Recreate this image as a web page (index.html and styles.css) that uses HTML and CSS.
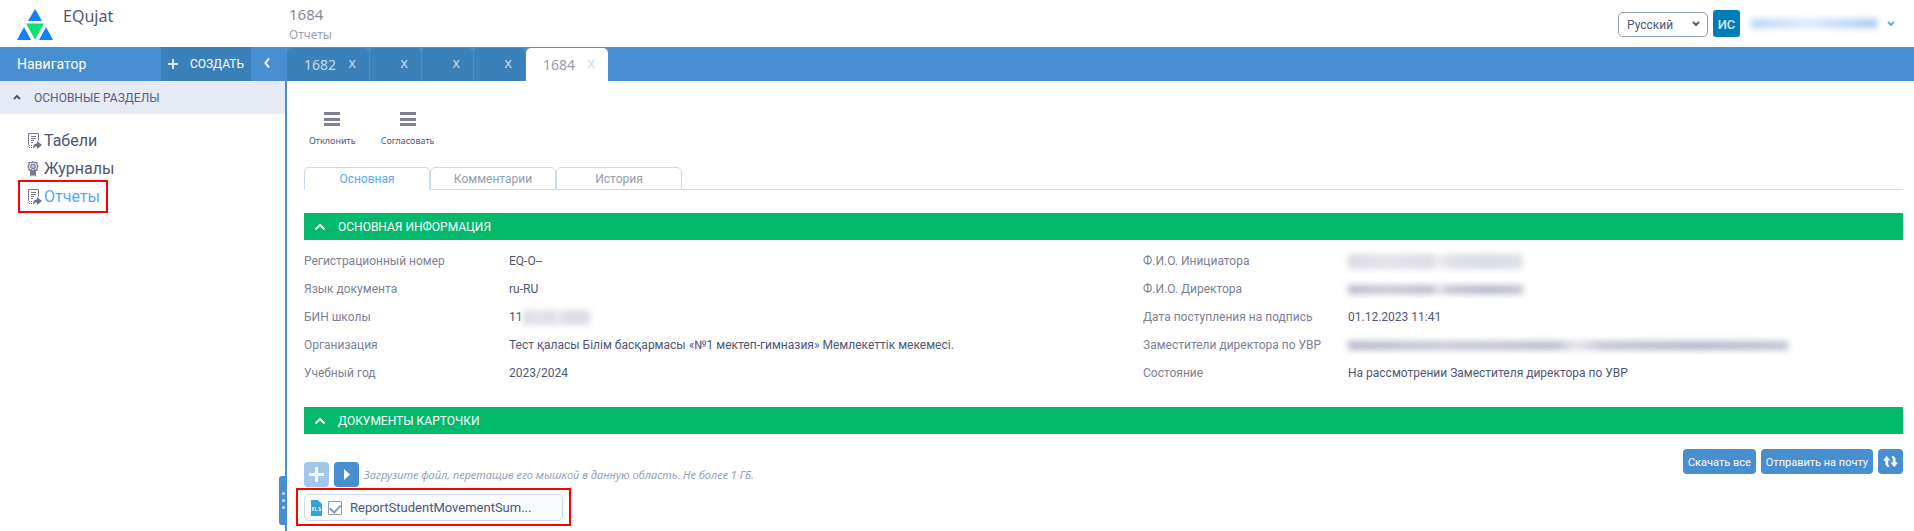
FILE: index.html
```html
<!DOCTYPE html>
<html lang="ru">
<head>
    <meta charset="UTF-8">
    <meta name="viewport" content="width=device-width, initial-scale=1.0">
    <title>EQujat</title>
    <link rel="stylesheet" href="styles.css">
</head>
<body>
    <header class="header">
        <div class="brand">
            <svg class="logo" viewBox="0 0 36 31" aria-hidden="true">
                <path fill="#0f82fb" d="M18 0l7 12H11zM7 18l7 13H0zM29 18l7 13H22z"/>
                <path fill="#0be075" d="M9 14.500h18L18 30.500z"/>
            </svg>
            <span class="brand-name">EQujat</span>
        </div>
        <div class="page-title">
            <h1>1684</h1>
            <p>Отчеты</p>
        </div>
        <div class="user">
            <div class="lang">
                <select aria-label="Язык">
                    <option>Русский</option>
                </select>
                <svg class="lang-arrow" viewBox="0 0 8 5" aria-hidden="true"><path d="M1 1l3 3 3-3"/></svg>
            </div>
            <span class="avatar">ИС</span>
            <button class="user-menu" aria-label="Меню пользователя">
                <span class="hidden-text user-name"></span>
                <svg viewBox="0 0 8 5" aria-hidden="true"><path d="M1 1l3 3 3-3"/></svg>
            </button>
        </div>
    </header>

    <div class="topbar">
        <div class="nav-head">
            <span class="nav-title">Навигатор</span>
            <button class="create">
                <svg viewBox="0 0 10 10" aria-hidden="true"><path d="M5 0v10M0 5h10"/></svg>
                СОЗДАТЬ
            </button>
            <button class="collapse" aria-label="Свернуть">
                <svg viewBox="0 0 6 10" aria-hidden="true"><path d="M5 0.500L1.500 5 5 9.500"/></svg>
            </button>
        </div>
        <nav class="doc-tabs">
            <div class="doc-tab"><a href="#">1682</a><button aria-label="Закрыть">x</button></div>
            <div class="doc-tab empty"><button aria-label="Закрыть">x</button></div>
            <div class="doc-tab empty"><button aria-label="Закрыть">x</button></div>
            <div class="doc-tab empty"><button aria-label="Закрыть">x</button></div>
            <div class="doc-tab active"><a href="#">1684</a><button aria-label="Закрыть">x</button></div>
        </nav>
    </div>

    <div class="layout">
        <aside class="sidebar">
            <button class="section-toggle">
                <svg viewBox="0 0 8 5" aria-hidden="true"><path d="M1 4l3-3 3 3"/></svg>
                ОСНОВНЫЕ РАЗДЕЛЫ
            </button>
            <ul class="menu">
                <li>
                    <a href="#">
                        <svg viewBox="0 0 15 16" aria-hidden="true">
                            <path fill="none" stroke="#77798e" d="M1.500 11V.5h10v7M4 3.500h5M4 5.500h5M4 7.500h3M4 9.500h2"/>
                            <path fill="none" stroke="#77798e" stroke-dasharray="1 1" d="M1.500 11l-1 3.500M2 12.500h4M2 14.500h5"/>
                            <path fill="#6f7188" d="M6 15c0-3 1.500-4.500 4-4.500V8l5 4-5 4v-2.500c-2 0-3 .5-4 1.500z"/>
                        </svg>
                        Табели
                    </a>
                </li>
                <li>
                    <a href="#">
                        <svg viewBox="0 0 15 16" aria-hidden="true">
                            <path fill="#77798e" d="M3 9l3 1.500L9 9v7l-2-2-1 1.500L5 14l-2 2z"/>
                            <path fill="#fff" stroke="#77798e" stroke-width="1.300" d="M6 .7l1.600 1 2.400-.1v2.400l1 1.400-1 1.500V9H7.500L6 10.300 4.500 9H2V6.900L1 5.400 2 4V1.600l2.400.1z"/>
                            <circle cx="6" cy="5.300" r="2.300" fill="#c9cad3" stroke="#77798e" stroke-width="1.200"/>
                        </svg>
                        Журналы
                    </a>
                </li>
                <li class="current">
                    <a href="#">
                        <svg viewBox="0 0 15 16" aria-hidden="true">
                            <path fill="none" stroke="#77798e" d="M1.500 11V.5h10v7M4 3.500h5M4 5.500h5M4 7.500h3M4 9.500h2"/>
                            <path fill="none" stroke="#77798e" stroke-dasharray="1 1" d="M1.500 11l-1 3.500M2 12.500h4M2 14.500h5"/>
                            <path fill="#6f7188" d="M6 15c0-3 1.500-4.500 4-4.500V8l5 4-5 4v-2.500c-2 0-3 .5-4 1.500z"/>
                        </svg>
                        Отчеты
                    </a>
                </li>
            </ul>
            <div class="splitter"><i></i><i></i><i></i></div>
        </aside>

        <main class="content">
            <div class="toolbar">
                <button><span class="bars"></span>Отклонить</button>
                <button><span class="bars"></span>Согласовать</button>
            </div>

            <div class="form-tabs" role="tablist">
                <button class="form-tab selected" role="tab">Основная</button>
                <button class="form-tab" role="tab">Комментарии</button>
                <button class="form-tab" role="tab">История</button>
            </div>

            <h2 class="panel-title">
                <svg viewBox="0 0 12 8" aria-hidden="true"><path d="M1.500 6.500L6 2l4.500 4.500"/></svg>
                ОСНОВНАЯ ИНФОРМАЦИЯ
            </h2>
            <div class="info">
                <dl>
                    <dt>Регистрационный номер</dt><dd>EQ-O--</dd>
                    <dt>Язык документа</dt><dd>ru-RU</dd>
                    <dt>БИН школы</dt><dd>11<span class="hidden-text pale bin"></span></dd>
                    <dt>Организация</dt><dd>Тест қаласы Білім басқармасы «№1 мектеп-гимназия» Мемлекеттік мекемесі.</dd>
                    <dt>Учебный год</dt><dd>2023/2024</dd>
                </dl>
                <dl>
                    <dt>Ф.И.О. Инициатора</dt><dd><span class="hidden-text pale person"></span></dd>
                    <dt>Ф.И.О. Директора</dt><dd><span class="hidden-text person"></span></dd>
                    <dt>Дата поступления на подпись</dt><dd>01.12.2023 11:41</dd>
                    <dt>Заместители директора по УВР</dt><dd><span class="hidden-text people"></span></dd>
                    <dt>Состояние</dt><dd>На рассмотрении Заместителя директора по УВР</dd>
                </dl>
            </div>

            <h2 class="panel-title">
                <svg viewBox="0 0 12 8" aria-hidden="true"><path d="M1.500 6.500L6 2l4.500 4.500"/></svg>
                ДОКУМЕНТЫ КАРТОЧКИ
            </h2>
            <div class="files">
                <div class="files-left">
                    <div class="upload">
                        <button class="square" aria-label="Добавить" disabled>
                            <svg viewBox="0 0 15 15" aria-hidden="true"><path fill="#fff" d="M6 0h3v6h6v3H9v6H6V9H0V6h6z"/></svg>
                        </button>
                        <button class="square" aria-label="Далее">
                            <svg viewBox="0 0 15 15" aria-hidden="true"><path fill="#fff" d="M5 2l6 5.500L5 13z"/></svg>
                        </button>
                        <em>Загрузите файл, перетащив его мышкой в данную область. Не более 1 ГБ.</em>
                    </div>
                    <div class="file-mark">
                        <label class="file">
                            <svg viewBox="0 0 11 16" aria-hidden="true">
                                <path fill="#35a3d4" d="M0 0h7l4 4v12H0z"/>
                                <path fill="none" stroke="#fff" stroke-width=".8" d="M1 7l2 4M3 7l-2 4M4.500 7v3.600H6.500M9.500 7.400H8V9h1.500v1.600H7.500"/>
                            </svg>
                            <input type="checkbox" checked>
                            <span>ReportStudentMovementSum...</span>
                        </label>
                    </div>
                </div>
                <div class="files-actions">
                    <button>Скачать все</button>
                    <button>Отправить на почту</button>
                    <button class="square" aria-label="Обновить">
                        <svg viewBox="0 0 16 12" aria-hidden="true"><path fill="#fff" d="M4 0l4 5H5.500v4l1.500 2.500H4.500L2.500 9V5H0zM12 12L8 7h2.500V3L9 .5h2.500L13.500 3v4H16z"/></svg>
                    </button>
                </div>
            </div>
        </main>
    </div>
</body>
</html>
```

FILE: styles.css
```css
* {
    box-sizing: border-box;
}

body {
    margin: 0;
    min-height: 100vh;
    display: flex;
    flex-direction: column;
    overflow: hidden;
    background: #fff;
    color: #4f5775;
    font-family: Roboto, "Noto Sans", sans-serif;
    font-size: 12px;
    line-height: 16px;
}

button, select, input {
    font: inherit;
    color: inherit;
}

button {
    border: none;
    padding: 0;
    background: none;
    cursor: pointer;
}

a {
    color: inherit;
    text-decoration: none;
}

h1, h2, p, ul, dl, dd {
    margin: 0;
    padding: 0;
    font-weight: normal;
}

/* Header */
.header {
    display: flex;
    height: 47px;
}

.brand {
    display: flex;
    align-items: flex-start;
    width: 289px;
    padding: 5px 0 0 17px;
}

.logo {
    width: 36px;
    height: 31px;
    margin: 4px 10px 0 0;
}

.brand-name {
    font-family: "Noto Sans", sans-serif;
    font-size: 16px;
    line-height: 22px;
}

.page-title {
    flex: 1;
    padding-top: 4px;
    color: #9aa3b5;
    font-family: "Noto Sans", sans-serif;
}

.page-title h1 {
    font-size: 15px;
    line-height: 20px;
    color: #858c9f;
}

.page-title p {
    line-height: 22px;
}

.user {
    display: flex;
    align-items: flex-start;
    gap: 5px;
    padding: 10px 19px 0 0;
}

.lang {
    position: relative;
    margin-top: 2px;
}

.lang select {
    width: 90px;
    height: 25px;
    padding: 0 8px;
    border: 1px solid #8e9cb5;
    border-radius: 5px;
    background: #fff;
    appearance: none;
}

.lang-arrow {
    position: absolute;
    top: 9px;
    right: 8px;
}

.lang-arrow, .user-menu svg, .section-toggle svg {
    width: 8px;
    height: 5px;
    fill: none;
    stroke: #4f5775;
    stroke-width: 2;
}

.avatar {
    width: 27px;
    height: 27px;
    border-radius: 3px;
    background: #007cb9;
    color: #d5eaf5;
    font-size: 13px;
    font-weight: 500;
    line-height: 29px;
    text-align: center;
}

.user-menu {
    display: flex;
    align-items: center;
    gap: 10px;
    height: 26px;
    padding-left: 6px;
}

.user-menu svg {
    stroke: #5eb0f7;
}

/* Censored personal data */
.hidden-text {
    display: inline-block;
    height: 9px;
    background: linear-gradient(90deg, #b5b7c8, #c6c8d3 22%, #b9bbca 47%, #e2e3e9 52%, #c0c2cf 58%, #b5b7c8 80%, #c0c2cf);
    filter: blur(3px);
    vertical-align: middle;
}

.pale {
    height: 15px;
    opacity: 0.5;
}

.user-name {
    width: 126px;
    background: linear-gradient(90deg, #b5d2f1, #dbe9f8 45%, #a3c7ee);
}

.bin {
    width: 67px;
}

.person {
    width: 175px;
}

.people {
    width: 440px;
}

/* Blue bar */
.topbar {
    display: flex;
    height: 34px;
    background: #478fd1;
    color: #fff;
}

.nav-head {
    display: flex;
    align-items: stretch;
    width: 287px;
}

.nav-title {
    flex: 1;
    padding-left: 17px;
    font-size: 14px;
    line-height: 34px;
}

.create {
    display: flex;
    align-items: center;
    justify-content: center;
    gap: 12px;
    width: 90px;
    background: #3a80b9;
}

.create svg {
    width: 10px;
    height: 10px;
    stroke: #dce9f4;
    stroke-width: 2;
}

.collapse {
    width: 36px;
    padding-right: 4px;
}

.collapse svg {
    width: 6px;
    height: 10px;
    fill: none;
    stroke: #fff;
    stroke-width: 2;
}

.doc-tabs {
    display: flex;
    gap: 1px;
    padding-top: 1px;
}

.doc-tab {
    display: flex;
    align-items: center;
    justify-content: space-between;
    width: 82px;
    padding: 0 13px 0 17px;
    border-radius: 5px 5px 0 0;
    background: #3a80b9;
    color: #c5daeb;
    font-family: "Noto Sans", sans-serif;
    font-size: 14px;
}

.doc-tab button {
    padding-bottom: 3px;
}

.doc-tab.empty {
    justify-content: flex-end;
    width: 51px;
}

.doc-tab.active {
    background: #fff;
    color: #949cad;
}

.doc-tab.active button {
    color: #cfdcea;
}

/* Sidebar */
.layout {
    flex: 1;
    display: flex;
}

.sidebar {
    position: relative;
    width: 287px;
    border-right: 2px solid #478fd1;
}

.section-toggle {
    display: flex;
    align-items: center;
    gap: 13px;
    width: 100%;
    height: 33px;
    padding-left: 13px;
    background: #e6eaf4;
    color: #5b6077;
}

.menu {
    padding: 13px 0 0 18px;
    list-style: none;
    font-size: 16px;
    line-height: 28px;
}

.menu li {
    display: flex;
}

.menu a {
    position: relative;
    display: flex;
    align-items: center;
    gap: 2px;
    padding: 0 8px 0 9px;
}

.menu svg {
    width: 15px;
    height: 16px;
}

.current {
    color: #57a8fb;
}

.current a::after {
    content: "";
    position: absolute;
    inset: -3px 0 -2px;
    border: 2px solid #f00;
}

.splitter {
    position: absolute;
    right: -2px;
    bottom: 6px;
    display: flex;
    flex-direction: column;
    align-items: center;
    justify-content: center;
    gap: 4px;
    width: 8px;
    height: 49px;
    border-radius: 3px 0 0 3px;
    background: #478fd1;
}

.splitter i {
    width: 3px;
    height: 3px;
    border-radius: 50%;
    background: #cfe2f5;
}

/* Content */
.content {
    flex: 1;
    padding: 31px 11px 0 17px;
}

.toolbar {
    display: flex;
    gap: 25px;
    padding-left: 5px;
    font-family: "Noto Sans", sans-serif;
    font-size: 9px;
}

.toolbar button {
    display: flex;
    flex-direction: column;
    align-items: center;
    gap: 7px;
}

.bars {
    width: 16px;
    height: 14px;
    border: solid #7f8196;
    border-width: 3px 0;
    background: linear-gradient(#7f8196, #7f8196) center / 100% 3px no-repeat;
}

.form-tabs {
    display: flex;
    margin-top: 18px;
}

.form-tabs::after {
    content: "";
    flex: 1;
    border-bottom: 1px solid #cbdbea;
}

.form-tab {
    width: 126px;
    height: 23px;
    border: 1px solid #cbdbea;
    border-radius: 5px 5px 0 0;
    color: #949cb0;
}

.form-tab.selected {
    border-bottom-color: transparent;
    color: #57a8fb;
}

.panel-title {
    display: flex;
    align-items: center;
    gap: 12px;
    height: 27px;
    margin-top: 23px;
    padding-left: 10px;
    background: #02b96c;
    color: #fff;
    font-size: 12px;
}

.panel-title svg {
    width: 12px;
    height: 8px;
    fill: none;
    stroke: #fff;
    stroke-width: 2;
}

.info {
    display: grid;
    grid-template-columns: 839fr 760fr;
    padding-top: 7px;
}

.info dl {
    display: grid;
    grid-template-columns: 205px 1fr;
    align-content: start;
    line-height: 28px;
}

.info dt {
    color: #7d8193;
}

.info dd {
    height: 28px;
}

.info + .panel-title {
    margin-top: 20px;
}

/* Files */
.files {
    display: flex;
    align-items: flex-start;
    justify-content: space-between;
    padding-top: 15px;
}

.files-left {
    padding-top: 13px;
}

.upload {
    display: flex;
    align-items: center;
    gap: 5px;
    color: #94a0b3;
    font-family: "Noto Sans", sans-serif;
    font-size: 11px;
}

.square, .files-actions button {
    height: 25px;
    border-radius: 4px;
    background: #478fd1;
    color: #fff;
}

.square {
    display: grid;
    place-items: center;
    width: 25px;
}

.square:disabled {
    background: #a3c7e8;
}

.square svg {
    width: 15px;
    height: 15px;
}

.file-mark {
    position: relative;
    width: 259px;
    margin-top: 7px;
}

.file-mark::after {
    content: "";
    position: absolute;
    inset: -6px -8px -5px;
    border: 2px solid #f00;
}

.file {
    display: flex;
    align-items: center;
    height: 27px;
    padding-left: 6px;
    border: 1px solid #cbdbea;
    border-radius: 5px;
    background: #f8fafc;
    font-size: 13px;
}

.file svg {
    width: 11px;
    height: 16px;
}

.file input {
    width: 14px;
    height: 14px;
    margin: 0 8px 0 6px;
    border: 1px solid #8e9cb5;
    border-radius: 1px;
    background: #fff;
    appearance: none;
}

.file input:checked::before {
    content: "";
    display: block;
    width: 9px;
    height: 5px;
    margin: 2px 0 0 1px;
    border: solid #8f9bab;
    border-width: 0 0 2px 2px;
    transform: rotate(-45deg);
}

.files-actions {
    display: flex;
    gap: 5px;
    font-size: 11px;
}

.files-actions button:not(.square) {
    padding: 3px 5px 0;
}
```
